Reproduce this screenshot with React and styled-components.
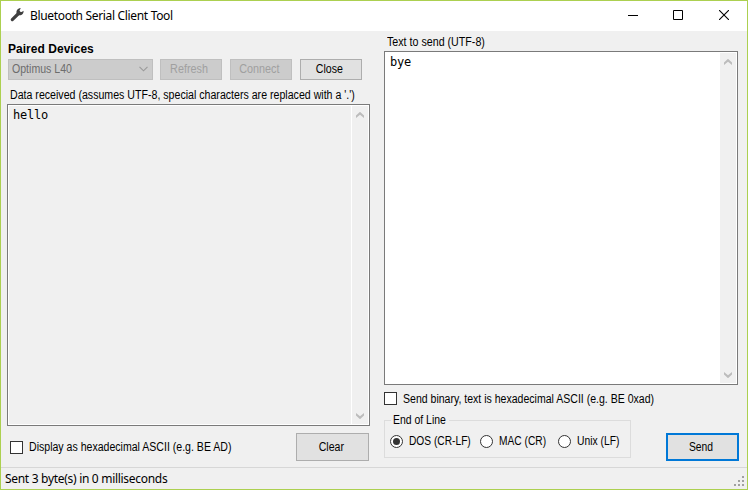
import React from 'react';
import styled, { createGlobalStyle, css } from 'styled-components';

const GlobalStyle = createGlobalStyle`
  * { box-sizing: border-box; }
  body { margin: 0; overflow: hidden; }
`;

const sans = '"Liberation Sans", Arial, sans-serif';
const ui = '"Noto Sans", "Open Sans", sans-serif';

const Window = styled.div`
  width: 748px;
  height: 490px;
  display: flex;
  flex-direction: column;
  border: 1px solid #acd050;
  background: #f0f0f0;
  color: #000;
  font: 12px/14px ${sans};
  white-space: nowrap;
`;

const TitleBar = styled.header`
  height: 30px;
  flex: none;
  display: flex;
  align-items: flex-start;
  padding-left: 8px;
  background: #fff;
`;

const Title = styled.h1`
  margin: 7px 0 0 5px;
  flex: 1;
  font: 400 12px/16px ${ui};
  letter-spacing: -0.33px;
`;

const CaptionButton = styled.button`
  width: 46px;
  height: 28px;
  display: grid;
  place-items: center;
  padding: 0;
  border: 0;
  background: none;
`;

const Client = styled.main`
  flex: 1;
  min-height: 0;
  display: flex;
  gap: 14px;
  padding: 0 9px 0 6px;
`;

const Column = styled.section`
  display: flex;
  flex-direction: column;
  align-items: flex-start;
  width: ${p => p.$width}px;
  padding-top: ${p => p.$top}px;
`;

/* Narrow UI lettering: full-height glyphs condensed horizontally. */
const Text = styled.span`
  display: inline-block;
  transform: scaleX(${p => p.$squeeze || 0.882});
  transform-origin: ${p => (p.$centered ? 'center' : 'left')};
`;

const Heading = styled.h2`
  margin: 0 0 2px 1px;
  font: 700 12px/14px ${sans};
  letter-spacing: 0.03px;
`;

const DeviceRow = styled.div`
  display: flex;
  align-items: center;
  padding-left: 1px;
  height: 22px;
`;

const Combo = styled.div`
  width: 145px;
  height: 21px;
  display: flex;
  align-items: center;
  justify-content: space-between;
  margin-right: 7px;
  padding: 0 4px 0 3px;
  border: 1px solid #bfbfbf;
  background: #ccc;
  color: #6d6d6d;
`;

const Button = styled.button`
  width: ${p => p.$w || 62}px;
  height: ${p => p.$h || 21}px;
  padding: 0 3px 0 0;
  border: 1px solid #adadad;
  background: #e1e1e1;
  color: #000;
  font: 12px/14px ${sans};
  & + & { margin-left: 8px; }
  &:disabled { border-color: #bfbfbf; background: #ccc; color: #a0a0a0; }
  ${p => p.$primary && css`
    border: 2px solid #0078d7;
    margin: 0 -1px -3px 0;
  `}
`;

const FieldLabel = styled.div`
  height: 14px;
  margin: ${p => p.$margin};
`;

const TextBox = styled.div`
  width: 100%;
  height: ${p => p.$h}px;
  display: flex;
  justify-content: space-between;
  border: 1px solid #7a7a7a;
  padding: 1px;
  background: #fff;
  font: 12px/14px "DejaVu Sans Mono", monospace;
  letter-spacing: -0.22px;
`;

const TextContent = styled.div`
  flex: 1;
  margin-right: ${p => (p.$readOnly ? 1 : 0)}px;
  padding: 2px 4px;
  background: ${p => (p.$readOnly ? '#f0f0f0' : '#fff')};
`;

const ScrollBar = styled.div`
  width: 16px;
  display: flex;
  flex-direction: column;
  align-items: flex-start;
  justify-content: space-between;
  padding: 6px 0 5px 4px;
  background: #f0f0f0;
`;

const Choice = styled.label`
  display: flex;
  height: 14px;
  min-width: 0;
  align-items: ${p => (p.$raised ? 'flex-start' : 'center')};
  gap: 6px;
  flex: 0 0 ${p => (p.$w ? `${p.$w}px` : 'auto')};
`;

const CheckMark = styled.span`
  width: 13px;
  height: 13px;
  flex: none;
  border: 1px solid #333;
  background: #fff;
`;

const RadioMark = styled.span`
  width: 13px;
  height: 13px;
  flex: none;
  display: grid;
  place-items: center;
  border: 1px solid #333;
  border-radius: 50%;
  background: #fff;
  &::after {
    content: '';
    width: 7px;
    height: 7px;
    border-radius: 50%;
    background: ${p => (p.$on ? '#333' : 'transparent')};
  }
`;

const LeftFooter = styled.div`
  width: 100%;
  display: flex;
  align-items: center;
  justify-content: space-between;
  margin-top: 7px;
  padding: 0 1px 0 3px;
`;

const RightFooter = styled.div`
  width: 100%;
  display: flex;
  align-items: flex-end;
  justify-content: space-between;
  margin-top: 7px;
`;

const Group = styled.fieldset`
  width: 247px;
  height: 45px;
  margin: 0;
  min-width: 0;
  padding: 7px 0 0 5px;
  border: 1px solid #dcdcdc;
`;

const Legend = styled.legend`
  width: 58px;
  height: 14px;
  margin-left: 1px;
  padding: 0 0 0 2px;
`;

const Options = styled.div`
  display: grid;
  grid-template-columns: 90px 78px 60px;
  height: 14px;
`;

const StatusBar = styled.footer`
  flex: none;
  height: 22px;
  display: flex;
  justify-content: space-between;
  align-items: flex-start;
  padding: 2px 2px 0 4px;
  border-top: 1px solid #d7d7d7;
  font: 12px/17px ${ui};
  letter-spacing: -0.3px;
`;

const Grip = styled.svg`
  margin-top: 6px;
`;

const WrenchIcon = styled.svg`
  margin-top: 6px;
`;

const DropArrow = () => (
  <svg width="9" height="6" viewBox="0 0 9 6" fill="none" stroke="#9a9a9a" strokeWidth="1.1">
    <path d="M.5.8 4.5 4.8 8.5.8" />
  </svg>
);

const Chevron = ({ down }) => (
  <svg width="8" height="6" viewBox="0 0 8 6" fill="#bcbcbc">
    <path d={down ? 'M0 0 4 3.2 8 0V2.6L4 6.2 0 2.6Z' : 'M0 6 4 2.8 8 6V3.4L4-.2 0 3.4Z'} />
  </svg>
);

const Wrench = () => (
  <WrenchIcon width="16" height="16" viewBox="0 0 16 16">
    <path d="M3.3 12.6 9 7" stroke="#404040" strokeWidth="3.2" strokeLinecap="round" />
    <path d="M11.9 1.2 10.5 3.3 11.2 4.7 12.7 4.9 14.5 3.7 C15 6.7 12.6 8.9 9.6 8.2 L7.6 6.2 C7 3.2 8.9.7 11.9 1.2Z" fill="#404040" />
  </WrenchIcon>
);

const Scroller = () => (
  <ScrollBar><Chevron /><Chevron down /></ScrollBar>
);

export default function App() {
  return (
    <>
      <GlobalStyle />
      <Window>
        <TitleBar>
          <Wrench />
          <Title>Bluetooth Serial Client Tool</Title>
          <CaptionButton aria-label="Minimize"><svg width="12" height="10"><path d="M2 5.5h10" stroke="#000" /></svg></CaptionButton>
          <CaptionButton aria-label="Maximize"><svg width="10" height="10"><path d="M.5.5h9v9h-9z" fill="none" stroke="#000" /></svg></CaptionButton>
          <CaptionButton aria-label="Close"><svg width="10" height="10"><path d="m0 0 10 10M10 0 0 10" stroke="#000" strokeWidth="1.1" /></svg></CaptionButton>
        </TitleBar>
        <Client>
          <Column $width={363} $top={11}>
            <Heading>Paired Devices</Heading>
            <DeviceRow>
              <Combo><Text>Optimus L40</Text><DropArrow /></Combo>
              <Button disabled><Text $centered $squeeze={0.9}>Refresh</Text></Button>
              <Button disabled><Text $centered $squeeze={0.9}>Connect</Text></Button>
              <Button><Text $centered>Close</Text></Button>
            </DeviceRow>
            <FieldLabel $margin="8px 0 2px 3px"><Text $squeeze={0.884}>Data received (assumes UTF-8, special characters are replaced with a '.')</Text></FieldLabel>
            <TextBox $h={322}><TextContent $readOnly>hello</TextContent><Scroller /></TextBox>
            <LeftFooter>
              <Choice><CheckMark /><Text $squeeze={0.88}>Display as hexadecimal ASCII (e.g. BE AD)</Text></Choice>
              <Button $w={73} $h={28}><Text $centered>Clear</Text></Button>
            </LeftFooter>
          </Column>
          <Column $width={355} $top={4}>
            <FieldLabel $margin="0 0 2px 3px"><Text $squeeze={0.89}>Text to send (UTF-8)</Text></FieldLabel>
            <TextBox $h={334}><TextContent>bye</TextContent><Scroller /></TextBox>
            <FieldLabel $margin="7px 0 0 0"><Choice $raised><CheckMark /><Text $squeeze={0.878}>Send binary, text is hexadecimal ASCII (e.g. BE 0xad)</Text></Choice></FieldLabel>
            <RightFooter>
              <Group>
                <Legend><Text $squeeze={0.87}>End of Line</Text></Legend>
                <Options>
                  <Choice><RadioMark $on /><Text $squeeze={0.85}>DOS (CR-LF)</Text></Choice>
                  <Choice><RadioMark /><Text $squeeze={0.85}>MAC (CR)</Text></Choice>
                  <Choice><RadioMark /><Text $squeeze={0.86}>Unix (LF)</Text></Choice>
                </Options>
              </Group>
              <Button $primary $w={73} $h={28}><Text $centered $squeeze={0.86}>Send</Text></Button>
            </RightFooter>
          </Column>
        </Client>
        <StatusBar>
          <span>Sent 3 byte(s) in 0 milliseconds</span>
          <Grip width="11" height="11" fill="#a0a0a0">
            <path d="M8 0h2v2H8zM4 4h2v2H4zM8 4h2v2H8zM0 8h2v2H0zM4 8h2v2H4zM8 8h2v2H8z" />
          </Grip>
        </StatusBar>
      </Window>
    </>
  );
}
